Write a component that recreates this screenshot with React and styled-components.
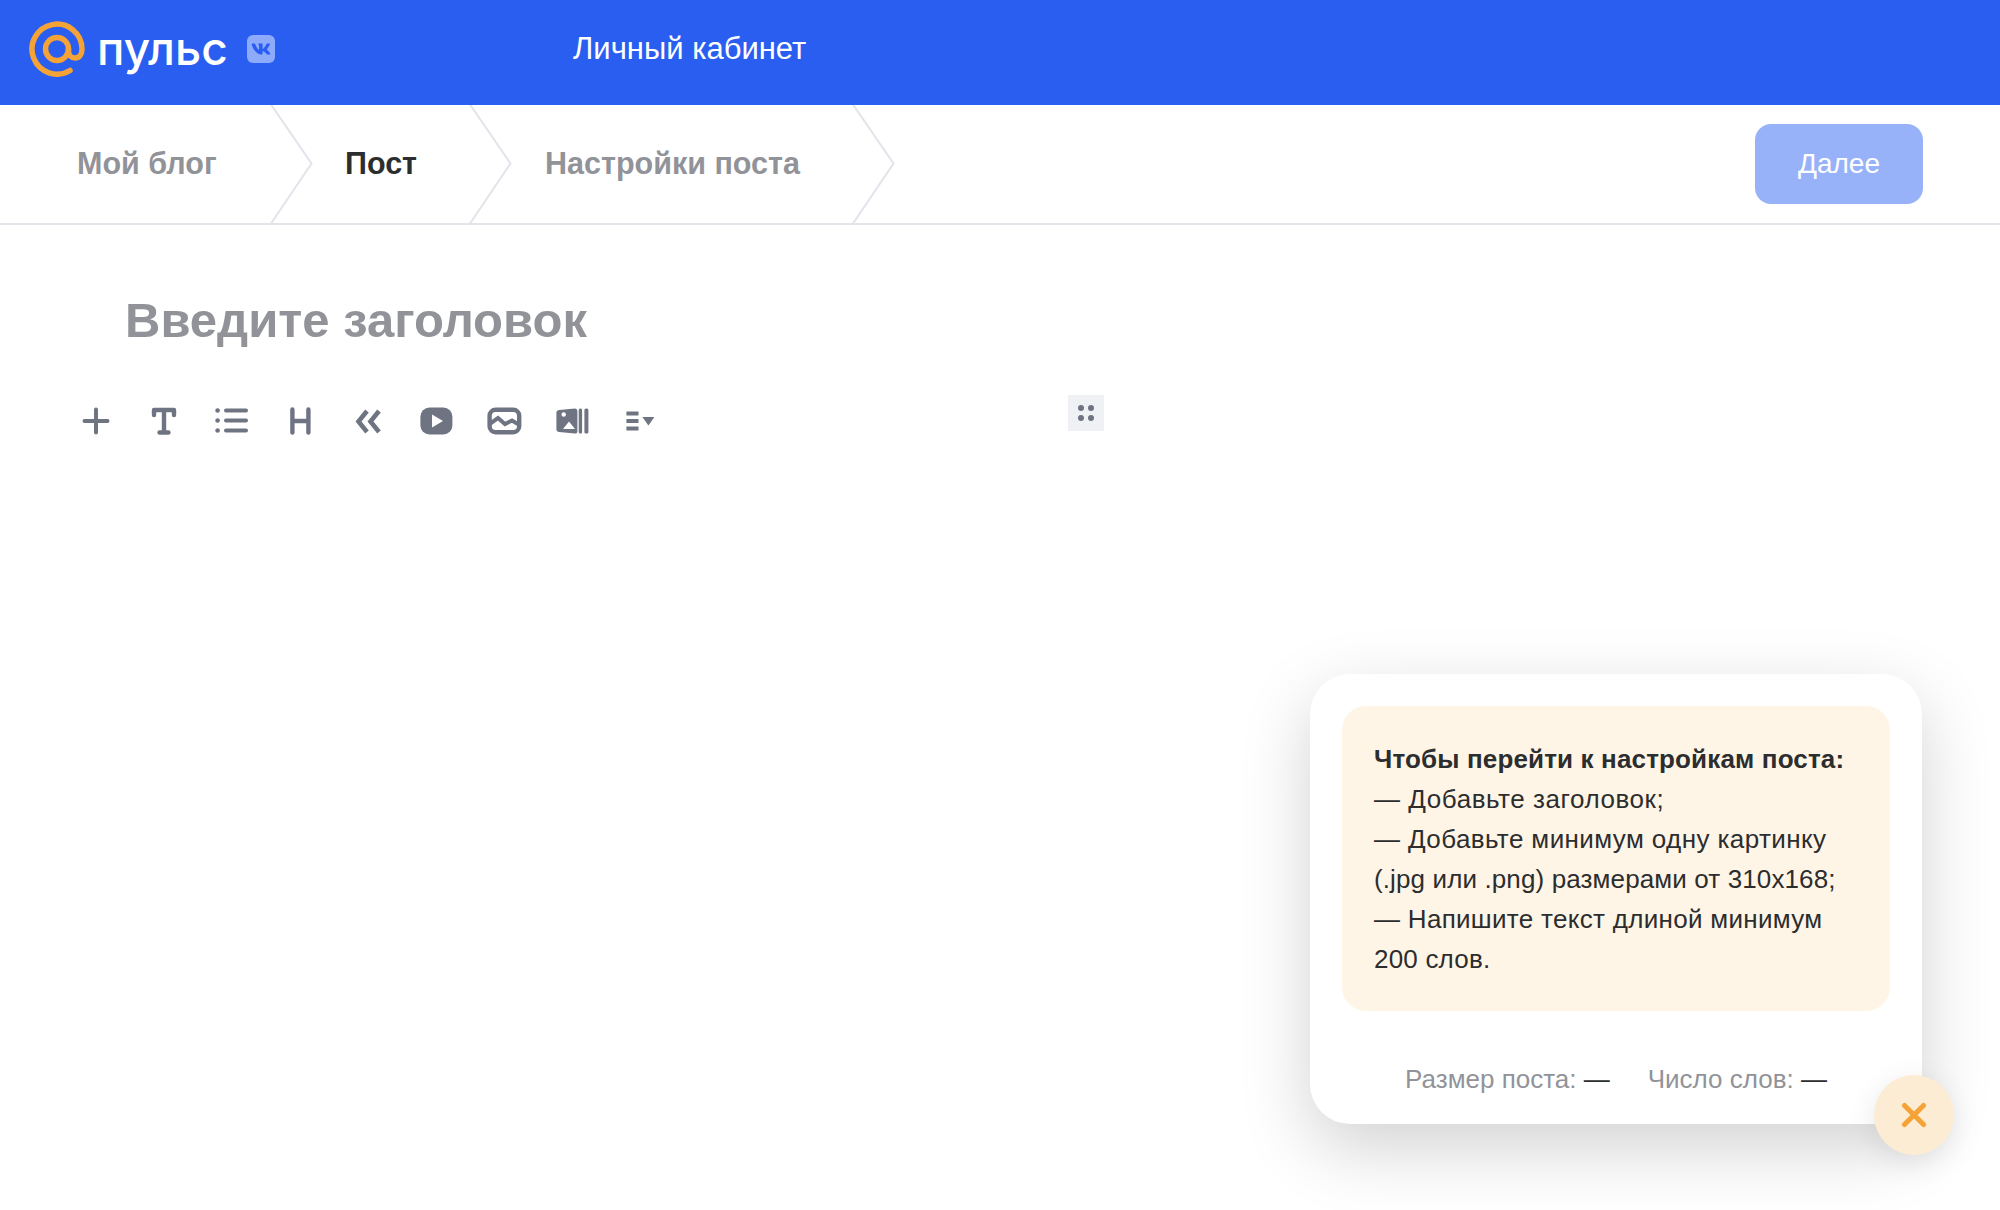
import styled, { createGlobalStyle } from "styled-components"
import { FaVk } from "react-icons/fa"

const GlobalStyle = createGlobalStyle`
    html, body {
        margin: 0;
        padding: 0;
        background: #fff;
        font-family: "Liberation Sans", Arial, sans-serif;
        color: #2c2d2e;
    }
`
const Page = styled.div`
    position: relative;
    width: 2000px;
    height: 1210px;
    overflow: hidden;
`
const Header = styled.header`
    height: 105px;
    background: #295ef1;
    display: flex;
    align-items: center;
    padding: 0 0 7px 29px;
    box-sizing: border-box;
`
const Logo = styled.div`
    display: flex;
    align-items: center;
    width: 544px;
`
const LogoMark = styled.svg`
    width: 56px;
    height: 56px;
    display: block;
`
const LogoText = styled.span`
    margin-left: 12px;
    font-family: Inter, sans-serif;
    font-size: 46px;
    font-weight: 500;
    line-height: 56px;
    color: #fff;
    position: relative;
    top: -1px;
`
const VkBadge = styled.span`
    margin-left: 19px;
    width: 28px;
    height: 28px;
    border-radius: 6px;
    background: #8dabfa;
    color: #295ef1;
    display: flex;
    align-items: center;
    justify-content: center;
    font-size: 20px;
`
const CabinetLink = styled.a`
    color: #fff;
    font-size: 31px;
    line-height: 36px;
`
const StepsBar = styled.div`
    height: 120px;
    border-bottom: 2px solid #e3e4ea;
    box-sizing: border-box;
    display: flex;
    align-items: center;
    justify-content: space-between;
    padding-right: 77px;
`
const Steps = styled.nav`
    display: flex;
    height: 100%;
`
const Step = styled.div`
    position: relative;
    width: ${(prop) => prop.$width}px;
    padding: 0 0 2px ${(prop) => prop.$left}px;
    box-sizing: border-box;
    display: flex;
    align-items: center;
    font-size: 30.5px;
    font-weight: bold;
    color: ${(prop) => (prop.$active ? "#2c2d2e" : "#919399")};
`
const Chevron = styled.svg`
    position: absolute;
    top: 0;
    right: -42px;
    width: 44px;
    height: 120px;
`
const NextButton = styled.button`
    width: 168px;
    height: 80px;
    border: none;
    border-radius: 16px;
    background: #97b2f9;
    color: #fff;
    font-family: inherit;
    font-size: 28px;
`
const Title = styled.h1`
    margin: 68px 0 0 125px;
    font-size: 49px;
    line-height: 54px;
    font-weight: bold;
    color: #919399;
`
const ToolRow = styled.div`
    position: relative;
    display: flex;
    margin-top: 58px;
    padding-left: 62px;
    height: 32px;
`
const ToolSlot = styled.span`
    width: 68px;
    display: flex;
    justify-content: center;
    color: #6f7482;
`
const ToolIcon = styled.svg`
    width: 36px;
    height: 32px;
    display: block;
    flex: none;
`
const Handle = styled.div`
    position: absolute;
    left: 1068px;
    top: -10px;
    width: 36px;
    height: 36px;
    background: #f0f1f4;
    display: grid;
    grid-template-columns: 6px 6px;
    gap: 4px;
    align-content: center;
    justify-content: center;
`
const HandleDot = styled.i`
    width: 6px;
    height: 6px;
    border-radius: 50%;
    background: #6f7482;
`
const Panel = styled.aside`
    position: absolute;
    left: 1310px;
    top: 674px;
    width: 612px;
    height: 450px;
    box-sizing: border-box;
    padding: 32px;
    background: #fff;
    border-radius: 40px;
    box-shadow: 0 24px 70px rgba(0, 0, 0, 0.18);
`
const Notice = styled.div`
    height: 305px;
    box-sizing: border-box;
    padding: 33px 32px 0;
    background: #fff5e7;
    border-radius: 24px;
    font-size: 26px;
    line-height: 40px;
`
const NoticeTitle = styled.div`
    font-weight: bold;
    letter-spacing: 0.15px;
`
const NoticeLine = styled.div`
    letter-spacing: ${(prop) => prop.$spacing || 0.4}px;
`
const Stats = styled.div`
    display: flex;
    justify-content: center;
    gap: 38px;
    margin-top: 48px;
    font-size: 26px;
    line-height: 40px;
    color: #919399;
`
const StatValue = styled.span`
    color: #2c2d2e;
`
const CloseButton = styled.button`
    position: absolute;
    left: 564px;
    top: 401px;
    width: 80px;
    height: 80px;
    padding: 0;
    border: none;
    border-radius: 50%;
    background: #fcecd3;
    box-shadow: 0 8px 30px rgba(0, 0, 0, 0.1);
    display: flex;
    align-items: center;
    justify-content: center;
`

const tools = [
    <>
        <path d="M6.5 16H29.5M18 4.5V27.5" stroke="currentColor" strokeWidth="4" strokeLinecap="round" fill="none" />
    </>,
    <>
        <path d="M8 10V5H28V10M18 5V27.5M13.5 27.5H22.5" stroke="currentColor" strokeWidth="4.4" strokeLinecap="round" strokeLinejoin="round" fill="none" />
    </>,
    <>
        <circle cx="3.6" cy="5.5" r="2.3" fill="currentColor" />
        <circle cx="3.6" cy="15.5" r="2.3" fill="currentColor" />
        <circle cx="3.6" cy="25.5" r="2.3" fill="currentColor" />
        <path d="M12 5.5H32M12 15.5H32M12 25.5H32" stroke="currentColor" strokeWidth="4" strokeLinecap="round" fill="none" />
    </>,
    <>
        <path d="M10.4 4.5V27.5M26.4 4.5V27.5M10.4 16H26.4" stroke="currentColor" strokeWidth="4.4" strokeLinecap="round" fill="none" />
    </>,
    <>
        <path d="M17 6L8.5 16.5L17 27M29 6L20.5 16.5L29 27" stroke="currentColor" strokeWidth="4.6" fill="none" />
    </>,
    <>
        <rect x="2.4" y="2.5" width="32" height="27" rx="9" fill="currentColor" />
        <path d="M14 9.5L25 16L14 22.5Z" fill="#fff" />
    </>,
    <>
        <rect x="3.6" y="4.7" width="29.6" height="22.6" rx="6" stroke="currentColor" strokeWidth="4.4" fill="none" />
        <path d="M3.5 19L12 13L19 19L26 15.5L33.5 20" stroke="currentColor" strokeWidth="4" fill="none" />
    </>,
    <>
        <path d="M5 5L21 3.5Q23.4 3.5 23.4 6V26.5Q23.4 29 21 28.5L5 27Q2.4 26.6 2.4 24.5V7.5Q2.4 5.4 5 5Z" fill="currentColor" />
        <circle cx="9.7" cy="9.5" r="2.2" fill="#fff" />
        <path d="M9 24L15 16.5L21 24Z" fill="#fff" />
        <rect x="24.7" y="3.5" width="3.4" height="25" rx="1.5" fill="currentColor" />
        <rect x="30.4" y="3.5" width="4" height="25" rx="1.5" fill="currentColor" />
    </>,
    <>
        <path d="M4.4 8.5H16.5M4.4 16H16.5M4.4 23.5H16.5" stroke="currentColor" strokeWidth="4" fill="none" />
        <path d="M20.4 12H32.4L26.4 20.5Z" fill="currentColor" />
    </>,
]

const chevron = (
    <Chevron viewBox="0 0 44 120">
        <path d="M1 -2L42.5 58.5L1 120" stroke="#e3e4ea" strokeWidth="2" fill="none" />
    </Chevron>
)

function App() {
    return (
        <Page>
            <GlobalStyle />
            <Header>
                <Logo>
                    <LogoMark viewBox="0 0 56 56">
                        <circle cx="28" cy="28" r="11.5" stroke="#f5a236" strokeWidth="5.5" fill="none" />
                        <path
                            d="M41 49.5A25 25 0 1 1 53 28C53 34 50 37 46 37C42 37 39.5 34 39.5 30V28"
                            stroke="#f5a236"
                            strokeWidth="5.5"
                            strokeLinecap="round"
                            fill="none"
                        />
                    </LogoMark>
                    <LogoText>пульс</LogoText>
                    <VkBadge>
                        <FaVk />
                    </VkBadge>
                </Logo>
                <CabinetLink>Личный кабинет</CabinetLink>
            </Header>
            <StepsBar>
                <Steps>
                    <Step $width={271} $left={77}>
                        Мой блог
                        {chevron}
                    </Step>
                    <Step $width={199} $left={74} $active>
                        Пост
                        {chevron}
                    </Step>
                    <Step $width={383} $left={75}>
                        Настройки поста
                        {chevron}
                    </Step>
                </Steps>
                <NextButton>Далее</NextButton>
            </StepsBar>
            <Title>Введите заголовок</Title>
            <ToolRow>
                {tools.map((icon, i) => (
                    <ToolSlot key={i}>
                        <ToolIcon viewBox="0 0 36 32">{icon}</ToolIcon>
                    </ToolSlot>
                ))}
                <Handle>
                    <HandleDot />
                    <HandleDot />
                    <HandleDot />
                    <HandleDot />
                </Handle>
            </ToolRow>
            <Panel>
                <Notice>
                    <NoticeTitle>Чтобы перейти к настройкам поста:</NoticeTitle>
                    <NoticeLine $spacing={0.55}>— Добавьте заголовок;</NoticeLine>
                    <NoticeLine>— Добавьте минимум одну картинку</NoticeLine>
                    <NoticeLine $spacing={0.12}>(.jpg или .png) размерами от 310x168;</NoticeLine>
                    <NoticeLine $spacing={0.3}>— Напишите текст длиной минимум</NoticeLine>
                    <NoticeLine $spacing={0.2}>200 слов.</NoticeLine>
                </Notice>
                <Stats>
                    <span>Размер поста: <StatValue>—</StatValue></span>
                    <span>Число слов: <StatValue>—</StatValue></span>
                </Stats>
                <CloseButton>
                    <svg width="26" height="26" viewBox="0 0 26 26">
                        <path d="M3.5 3.5L22.5 22.5M22.5 3.5L3.5 22.5" stroke="#f5a236" strokeWidth="5" strokeLinecap="round" />
                    </svg>
                </CloseButton>
            </Panel>
        </Page>
    )
}

export default App
